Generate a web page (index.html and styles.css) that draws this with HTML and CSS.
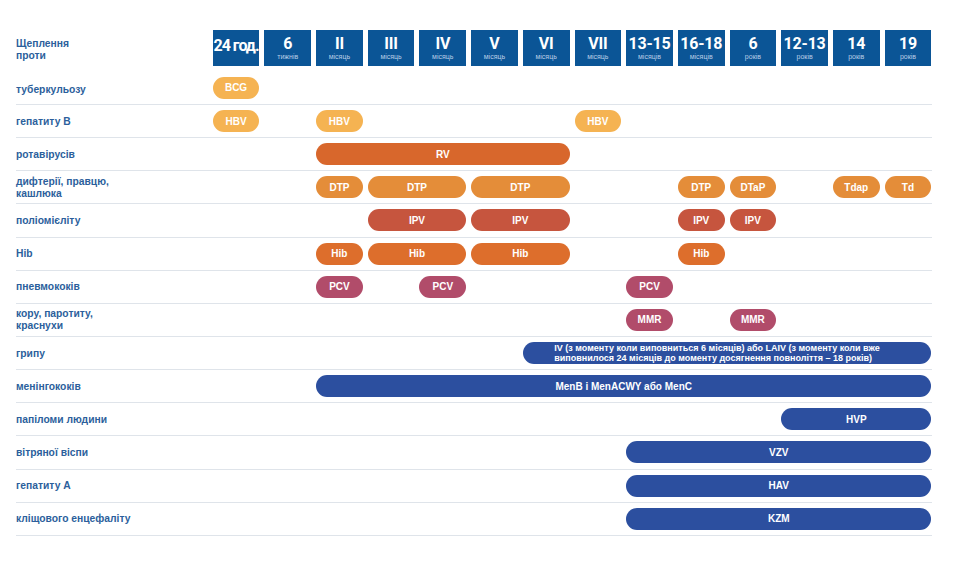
FILE: index.html
```html
<!DOCTYPE html>
<html lang="uk">
<head>
<meta charset="utf-8">
<title>Календар щеплень</title>
<link rel="stylesheet" href="styles.css">
</head>
<body>
<div class="chart">
  <div class="row head">
    <div class="label">Щеплення<br>проти</div>
    <div class="age"><b class="tight">24 год.</b></div>
    <div class="age"><b>6</b><span>тижнів</span></div>
    <div class="age"><b>II</b><span>місяць</span></div>
    <div class="age"><b>III</b><span>місяць</span></div>
    <div class="age"><b>IV</b><span>місяць</span></div>
    <div class="age"><b>V</b><span>місяць</span></div>
    <div class="age"><b>VI</b><span>місяць</span></div>
    <div class="age"><b>VII</b><span>місяць</span></div>
    <div class="age"><b>13-15</b><span>місяців</span></div>
    <div class="age"><b>16-18</b><span>місяців</span></div>
    <div class="age"><b>6</b><span>років</span></div>
    <div class="age"><b>12-13</b><span>років</span></div>
    <div class="age"><b>14</b><span>років</span></div>
    <div class="age"><b>19</b><span>років</span></div>
  </div>

  <div class="row first">
    <div class="label">туберкульозу</div>
    <div class="pill lo at1">BCG</div>
  </div>

  <div class="row">
    <div class="label">гепатиту В</div>
    <div class="pill lo at1">HBV</div>
    <div class="pill lo at3">HBV</div>
    <div class="pill lo at8">HBV</div>
  </div>

  <div class="row">
    <div class="label">ротавірусів</div>
    <div class="pill rv at3 sp5">RV</div>
  </div>

  <div class="row">
    <div class="label">дифтерії, правцю,<br>кашлюка</div>
    <div class="pill dtp at3">DTP</div>
    <div class="pill dtp at4 sp2">DTP</div>
    <div class="pill dtp at6 sp2">DTP</div>
    <div class="pill dtp at10">DTP</div>
    <div class="pill dtp at11">DTaP</div>
    <div class="pill dtp at13">Tdap</div>
    <div class="pill dtp at14">Td</div>
  </div>

  <div class="row">
    <div class="label">поліомієліту</div>
    <div class="pill ipv at4 sp2">IPV</div>
    <div class="pill ipv at6 sp2">IPV</div>
    <div class="pill ipv at10">IPV</div>
    <div class="pill ipv at11">IPV</div>
  </div>

  <div class="row">
    <div class="label">Hib</div>
    <div class="pill hib at3">Hib</div>
    <div class="pill hib at4 sp2">Hib</div>
    <div class="pill hib at6 sp2">Hib</div>
    <div class="pill hib at10">Hib</div>
  </div>

  <div class="row">
    <div class="label">пневмококів</div>
    <div class="pill pcv at3">PCV</div>
    <div class="pill pcv at5">PCV</div>
    <div class="pill pcv at9">PCV</div>
  </div>

  <div class="row">
    <div class="label">кору, паротиту,<br>краснухи</div>
    <div class="pill pcv at9">MMR</div>
    <div class="pill pcv at11">MMR</div>
  </div>

  <div class="row">
    <div class="label">грипу</div>
    <div class="pill blue flu at7 sp8"><span>IV (з моменту коли виповниться 6 місяців) або LAIV (з моменту коли вже<br>виповнилося 24 місяців до моменту досягнення повноліття – 18 років)</span></div>
  </div>

  <div class="row">
    <div class="label">менінгококів</div>
    <div class="pill blue at3 sp12">MenB і MenACWY або MenC</div>
  </div>

  <div class="row">
    <div class="label">папіломи людини</div>
    <div class="pill blue at12 sp3">HVP</div>
  </div>

  <div class="row">
    <div class="label">вітряної віспи</div>
    <div class="pill blue at9 sp6">VZV</div>
  </div>

  <div class="row">
    <div class="label">гепатиту А</div>
    <div class="pill blue at9 sp6">HAV</div>
  </div>

  <div class="row">
    <div class="label">кліщового енцефаліту</div>
    <div class="pill blue at9 sp6">KZM</div>
  </div>
</div>
</body>
</html>
```

FILE: styles.css
```css
html, body {
  margin: 0;
  padding: 0;
  background: #ffffff;
}

body {
  font-family: "Liberation Sans", Arial, sans-serif;
  width: 960px;
  height: 576px;
  overflow: hidden;
}

.chart {
  margin-left: 16px;
  padding-top: 30px;
  width: 916px;
}

.row {
  display: grid;
  grid-template-columns: 191.7px repeat(14, 46.7px);
  column-gap: 5px;
  align-items: center;
  height: 33.15px;
  box-sizing: border-box;
  border-bottom: 1px solid #dfe4ea;
}

.row > * {
  grid-row: 1;
}

.row.head {
  height: 36px;
  border-bottom: none;
  margin-bottom: 5.85px;
  align-items: stretch;
}

.label {
  grid-column: 1;
  font-size: 10.3px;
  line-height: 12px;
  font-weight: bold;
  color: #2c5f9c;
  align-self: center;
  padding-top: 1px;
}

.row.head .label {
  padding-top: 3px;
}

.row.first .label {
  padding-top: 4px;
}

.age {
  background: #0b5596;
  color: #ffffff;
  display: flex;
  flex-direction: column;
  align-items: center;
  justify-content: center;
  padding-bottom: 1px;
}

.age b {
  font-family: Roboto, "Liberation Sans", sans-serif;
  font-weight: bold;
  font-size: 16px;
  line-height: 17px;
  letter-spacing: -0.2px;
}

.age b.tight {
  letter-spacing: -1px;
  margin-top: -4px;
}

.age span {
  font-size: 7px;
  line-height: 8px;
  color: #b9cde6;
  margin-top: 1px;
}

.pill {
  height: 22px;
  border-radius: 11px;
  color: #ffffff;
  font-weight: bold;
  font-size: 10px;
  display: flex;
  align-items: center;
  justify-content: center;
  white-space: nowrap;
}

.pill.flu {
  font-size: 9px;
  line-height: 10.5px;
  text-align: left;
  padding-right: 20px;
  box-sizing: border-box;
}

.lo { background: #f5b352; }
.rv { background: #d8672c; }
.dtp { background: #e48d39; }
.ipv { background: #c6553e; }
.hib { background: #dd6e2c; }
.pcv { background: #b14c6a; }
.blue { background: #2c4f9f; }

.at1 { grid-column-start: 2; }
.at3 { grid-column-start: 4; }
.at4 { grid-column-start: 5; }
.at5 { grid-column-start: 6; }
.at6 { grid-column-start: 7; }
.at7 { grid-column-start: 8; }
.at8 { grid-column-start: 9; }
.at9 { grid-column-start: 10; }
.at10 { grid-column-start: 11; }
.at11 { grid-column-start: 12; }
.at12 { grid-column-start: 13; }
.at13 { grid-column-start: 14; }
.at14 { grid-column-start: 15; }

.sp2 { grid-column-end: span 2; }
.sp3 { grid-column-end: span 3; }
.sp5 { grid-column-end: span 5; }
.sp6 { grid-column-end: span 6; }
.sp8 { grid-column-end: span 8; }
.sp12 { grid-column-end: span 12; }
```
